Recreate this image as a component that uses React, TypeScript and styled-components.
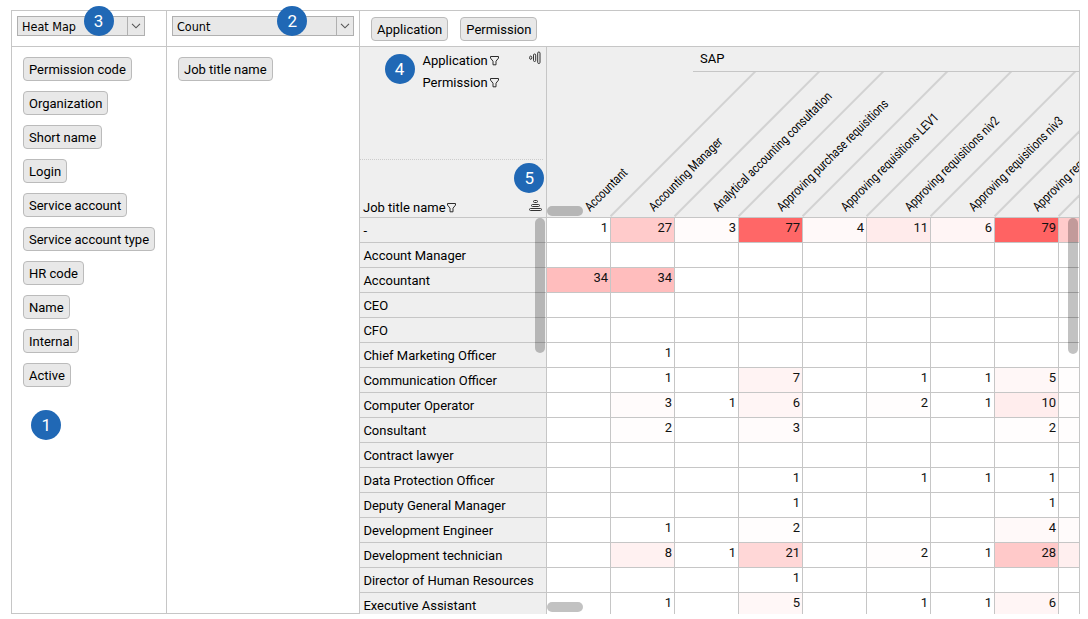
import React from 'react';
import styled, { createGlobalStyle } from 'styled-components';

const LINE = '#c6c6c6';

const GlobalStyle = createGlobalStyle`
  * { box-sizing: border-box; }
  body {
    margin: 0;
    background: #fff;
    color: #000;
    font: 13px/16px Roboto, sans-serif;
    overflow: hidden;
  }
`;

const Pivot = styled.div`
  position: relative;
  display: grid;
  grid-template-columns: 155px 193px 1fr;
  grid-template-rows: 36px 1fr;
  width: 1069px;
  height: 604px;
  margin: 10px 0 0 11px;
  border: 1px solid ${LINE};
`;

const Area = styled.div<{ $right?: boolean; $bottom?: boolean }>`
  min-width: 0;
  border-right: ${p => (p.$right ? `1px solid ${LINE}` : '0')};
  border-bottom: ${p => (p.$bottom ? `1px solid ${LINE}` : '0')};
`;

const SelectArea = styled(Area)`
  padding: 5px 5px 0;
`;

const Select = styled.div<{ $width: number }>`
  display: flex;
  justify-content: space-between;
  width: ${p => p.$width}px;
  height: 20px;
  border: 1px solid #b0b0b0;
  background: #e8e8e8;
  font: 12.5px/19px 'DejaVu Sans Condensed', 'DejaVu Sans', sans-serif;
  font-stretch: condensed;
  padding-left: 4px;
`;

const Arrow = styled.span`
  display: flex;
  align-items: center;
  justify-content: center;
  width: 18px;
  border: 1px solid #b0b0b0;
  margin: -1px -1px -1px 0;
`;

const FieldList = styled(Area)`
  display: flex;
  flex-direction: column;
  align-items: flex-start;
  gap: 10px;
  padding: 10px 11px;
`;

const ColumnFields = styled(Area)`
  display: flex;
  gap: 12px;
  padding: 6px 11px;
`;

const Field = styled.span`
  height: 24px;
  padding: 4px 5px;
  border: 1px solid #bbb;
  border-radius: 4px;
  background: #e8e8e8;
  white-space: nowrap;
`;

const Table = styled.div`
  display: grid;
  grid-template-columns: 187px 1fr;
  grid-template-rows: 171px 1fr;
  height: 567px;
  overflow: hidden;
`;

const Corner = styled.div`
  display: flex;
  flex-direction: column;
  border-right: 1px solid ${LINE};
  border-bottom: 1px solid ${LINE};
  background: #efefef;
`;

const CornerTop = styled.div`
  display: flex;
  justify-content: space-between;
  height: 113px;
  margin-right: 3px;
  padding: 3px 2px 0 62.5px;
  border-bottom: 1px dotted #ccc;
`;

const CornerBottom = styled.div`
  flex: 1;
  display: flex;
  justify-content: space-between;
  align-items: flex-end;
  padding: 0 4px 0 3px;
`;

const AxisLabel = styled.div`
  display: flex;
  align-items: center;
  gap: 2px;
  height: 22px;
`;

const RowAxisLabel = styled(AxisLabel)`
  gap: 1px;
  height: 19px;
`;

const SortRowsButton = styled.span`
  display: flex;
  padding-bottom: 6px;
`;

const Heads = styled.div`
  position: relative;
  overflow: hidden;
  border-bottom: 1px solid ${LINE};
  background: #efefef;
`;

const Group = styled.div`
  height: 25px;
  margin-left: 146px;
  padding: 4px 7px;
  border-bottom: 1px solid ${LINE};
`;

const HeadRow = styled.div`
  display: flex;
  height: 145px;
  overflow: hidden;
`;

const Head = styled.div`
  position: relative;
  flex: 0 0 64px;
  &::after {
    content: '';
    position: absolute;
    left: 63.5px;
    bottom: 0;
    width: 220px;
    height: 1.6px;
    background: #d2d2d2;
    transform-origin: 0 100%;
    transform: rotate(-45deg);
  }
`;

const HeadText = styled.span`
  position: absolute;
  left: 45px;
  bottom: 3px;
  line-height: 15px;
  white-space: nowrap;
  transform-origin: 0 100%;
  transform: rotate(-45deg) scaleX(0.815);
`;

const RowLabels = styled.div`
  overflow: hidden;
  border-right: 1px solid ${LINE};
  background: #efefef;
`;

const RowLabel = styled.div`
  height: 25px;
  padding: 5px 3px 0 3.4px;
  border-bottom: 1px solid ${LINE};
  white-space: nowrap;
`;

const Cells = styled.div`
  overflow: hidden;
`;

const CellRow = styled.div`
  display: flex;
`;

const Cell = styled.div<{ $value: number }>`
  flex: 0 0 64px;
  height: 25px;
  padding: 2px 2px 0 0;
  border-right: 1px solid ${LINE};
  border-bottom: 1px solid ${LINE};
  background-color: ${p => `rgb(255, ${257 - 2 * Math.max(1, p.$value)}, ${257 - 2 * Math.max(1, p.$value)})`};
  background-clip: padding-box;
  color: #111;
  text-align: right;
`;

const Thumb = styled.div<{ $x: number; $y: number; $w: number; $h: number }>`
  position: absolute;
  left: ${p => p.$x}px;
  top: ${p => p.$y}px;
  width: ${p => p.$w}px;
  height: ${p => p.$h}px;
  border-radius: 5px;
  background: rgba(0, 0, 0, 0.24);
`;

const Badge = styled.div<{ $x: number; $y: number }>`
  position: absolute;
  left: ${p => p.$x}px;
  top: ${p => p.$y}px;
  width: 30px;
  height: 30px;
  border-radius: 50%;
  background: #2068b5;
  color: #fff;
  font: 17px/30px Roboto, sans-serif;
  text-align: center;
`;

const Chevron = () => (
  <svg width="10" height="6" viewBox="0 0 10 6" fill="none" stroke="#555" strokeWidth="1.1">
    <path d="M1 .8l4 4 4-4" />
  </svg>
);

const Funnel = () => (
  <svg width="10" height="12" viewBox="0 0 10 12" fill="none" stroke="#2c2c2c">
    <path d="M.5 1.5h8v1.6L6 6.2v3.6H3V6.2L.5 3.1z" />
  </svg>
);

const SortColumns = () => (
  <svg width="12" height="15" viewBox="0 0 12 15" fill="none" stroke="#333">
    <ellipse cx="1.7" cy="7.7" rx="1.1" ry="1.7" />
    <rect x="4.5" y="4" width="2.2" height="7.5" rx="1.1" />
    <rect x="8.7" y="2" width="2.3" height="11.5" rx="1.1" />
  </svg>
);

const SortRows = () => (
  <svg width="13" height="12" viewBox="0 0 13 12" fill="none" stroke="#333">
    <rect x="4.5" y="1.5" width="4" height="2" rx="1" />
    <rect x="2.5" y="5.5" width="8" height="2" rx="1" />
    <rect x=".5" y="9.5" width="12" height="2" rx="1" />
  </svg>
);

const fields = ['Permission code', 'Organization', 'Short name', 'Login', 'Service account',
  'Service account type', 'HR code', 'Name', 'Internal', 'Active'];

const heads = ['Accountant', 'Accounting Manager', 'Analytical accounting consultation',
  'Approving purchase requisitions', 'Approving requisitions LEV1', 'Approving requisitions niv2',
  'Approving requisitions niv3', 'Approving requisitions niv4'];

const rows: [string, number[], number?][] = [
  ['-', [1, 27, 3, 77, 4, 11, 6, 79], 27],
  ['Account Manager', []],
  ['Accountant', [34, 34]],
  ['CEO', []],
  ['CFO', []],
  ['Chief Marketing Officer', [0, 1]],
  ['Communication Officer', [0, 1, 0, 7, 0, 1, 1, 5], 2],
  ['Computer Operator', [0, 3, 1, 6, 0, 2, 1, 10], 2],
  ['Consultant', [0, 2, 0, 3, 0, 0, 0, 2], 2],
  ['Contract lawyer', []],
  ['Data Protection Officer', [0, 0, 0, 1, 0, 1, 1, 1]],
  ['Deputy General Manager', [0, 0, 0, 1, 0, 0, 0, 1]],
  ['Development Engineer', [0, 1, 0, 2, 0, 0, 0, 4], 3],
  ['Development technician', [0, 8, 1, 21, 0, 2, 1, 28], 9],
  ['Director of Human Resources', [0, 0, 0, 1]],
  ['Executive Assistant', [0, 1, 0, 5, 0, 1, 1, 6]],
];

const columns = [0, 1, 2, 3, 4, 5, 6, 7];

export default function App() {
  return (
    <>
      <GlobalStyle />
      <Pivot>
        <SelectArea $right $bottom>
          <Select $width={128}>Heat Map<Arrow><Chevron /></Arrow></Select>
        </SelectArea>
        <SelectArea $right $bottom>
          <Select $width={182}>Count<Arrow><Chevron /></Arrow></Select>
        </SelectArea>
        <ColumnFields $bottom>
          <Field>Application</Field>
          <Field>Permission</Field>
        </ColumnFields>
        <FieldList $right>
          {fields.map(f => <Field key={f}>{f}</Field>)}
        </FieldList>
        <FieldList $right>
          <Field>Job title name</Field>
        </FieldList>
        <Table>
          <Corner>
            <CornerTop>
              <div>
                <AxisLabel>Application<Funnel /></AxisLabel>
                <AxisLabel>Permission<Funnel /></AxisLabel>
              </div>
              <SortColumns />
            </CornerTop>
            <CornerBottom>
              <RowAxisLabel>Job title name<Funnel /></RowAxisLabel>
              <SortRowsButton><SortRows /></SortRowsButton>
            </CornerBottom>
          </Corner>
          <Heads>
            <Group>SAP</Group>
            <HeadRow>
              {heads.map(h => (
                <Head key={h}><HeadText>{h}</HeadText></Head>
              ))}
            </HeadRow>
          </Heads>
          <RowLabels>
            {rows.map(([name]) => <RowLabel key={name}>{name}</RowLabel>)}
          </RowLabels>
          <Cells>
            {rows.map(([name, values, last]) => (
              <CellRow key={name}>
                {columns.map(c => (
                  <Cell key={c} $value={values[c] || 0}>{values[c] || ''}</Cell>
                ))}
                <Cell $value={last || 0} />
              </CellRow>
            ))}
          </Cells>
        </Table>
        <Thumb $x={523} $y={207} $w={10} $h={135} />
        <Thumb $x={1056} $y={207} $w={10} $h={136} />
        <Thumb $x={535} $y={195} $w={36} $h={10} />
        <Thumb $x={535} $y={591} $w={36} $h={10} />
        <Badge $x={19.4} $y={399.4}>1</Badge>
        <Badge $x={265.4} $y={-4.6}>2</Badge>
        <Badge $x={71.6} $y={-4.6}>3</Badge>
        <Badge $x={372.6} $y={43.4}>4</Badge>
        <Badge $x={502.4} $y={152.4}>5</Badge>
      </Pivot>
    </>
  );
}
